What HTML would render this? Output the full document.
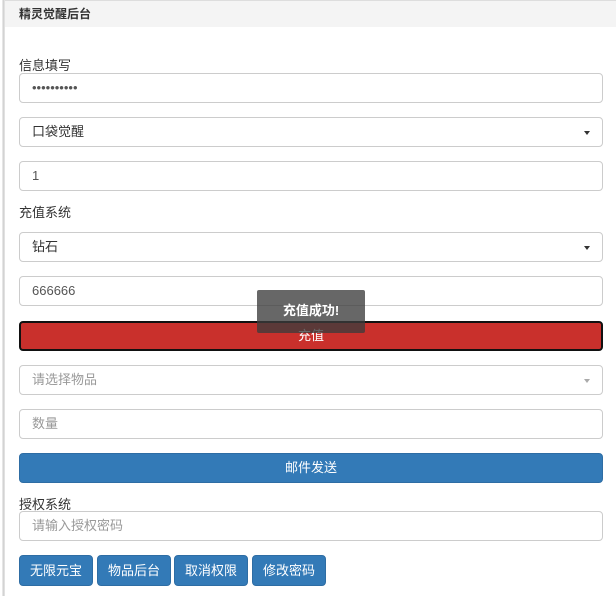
<!DOCTYPE html>
<html><head><meta charset="utf-8"><style>
*{box-sizing:border-box;margin:0;padding:0}
body{width:616px;height:596px;background:#fff;font-family:"Liberation Sans","Noto Sans CJK SC",sans-serif;font-size:13px;color:#333;position:relative;overflow:hidden}
.a{position:absolute}
.edge{left:0;top:0;width:5px;height:596px;background:linear-gradient(90deg,#fff 0,#fff 2px,#ccc 3px,#e8e8e8 5px)}
.hdr{left:5px;top:0;width:611px;height:27px;background:#f4f4f4;border-top:1px solid #ddd;font-weight:bold;padding:4px 0 0 14px;font-size:12px}
.in{left:19px;width:584px;height:30px;border:1px solid #ccc;border-radius:4px;padding:5px 12px;font-size:13px;color:#555;line-height:18px}
.ph{color:#999}
.car{position:absolute;right:12px;top:13px;border-left:3px solid transparent;border-right:3px solid transparent;border-top:4px solid #333}
.lbl{left:19px;font-size:13px}
.btn{color:#fff;text-align:center;border-radius:4px;font-size:13px}
.blue{background:#337ab7;border:1px solid #2e6da4}
</style></head><body>
<div class="a edge"></div>
<div class="a hdr">精灵觉醒后台</div>
<div class="a lbl" style="top:55px">信息填写</div>
<div class="a in" style="top:73px">••••••••••</div>
<div class="a in" style="top:117px;color:#333">口袋觉醒<span class="car"></span></div>
<div class="a in" style="top:161px">1</div>
<div class="a lbl" style="top:202px">充值系统</div>
<div class="a in" style="top:232px;color:#333">钻石<span class="car"></span></div>
<div class="a in" style="top:276px">666666</div>
<div class="a btn" style="left:19px;top:321px;width:584px;height:30px;background:#c9302c;border:2px solid #111;line-height:26px">充值</div>
<div class="a in ph" style="top:365px">请选择物品<span class="car" style="border-top-color:#aaa"></span></div>
<div class="a in ph" style="top:409px">数量</div>
<div class="a btn blue" style="left:19px;top:453px;width:584px;height:30px;line-height:28px">邮件发送</div>
<div class="a lbl" style="top:494px">授权系统</div>
<div class="a in ph" style="top:511px">请输入授权密码</div>
<div class="a btn blue" style="left:19px;top:555px;width:74px;height:31px;line-height:29px">无限元宝</div>
<div class="a btn blue" style="left:97px;top:555px;width:74px;height:31px;line-height:29px">物品后台</div>
<div class="a btn blue" style="left:174px;top:555px;width:74px;height:31px;line-height:29px">取消权限</div>
<div class="a btn blue" style="left:252px;top:555px;width:74px;height:31px;line-height:29px">修改密码</div>
<div class="a" style="left:257px;top:290px;width:108px;height:43px;background:rgba(60,60,60,0.78);border-radius:2px;color:#fff;font-weight:bold;text-align:center;line-height:42px;font-size:13px">充值成功!</div>
</body></html>
